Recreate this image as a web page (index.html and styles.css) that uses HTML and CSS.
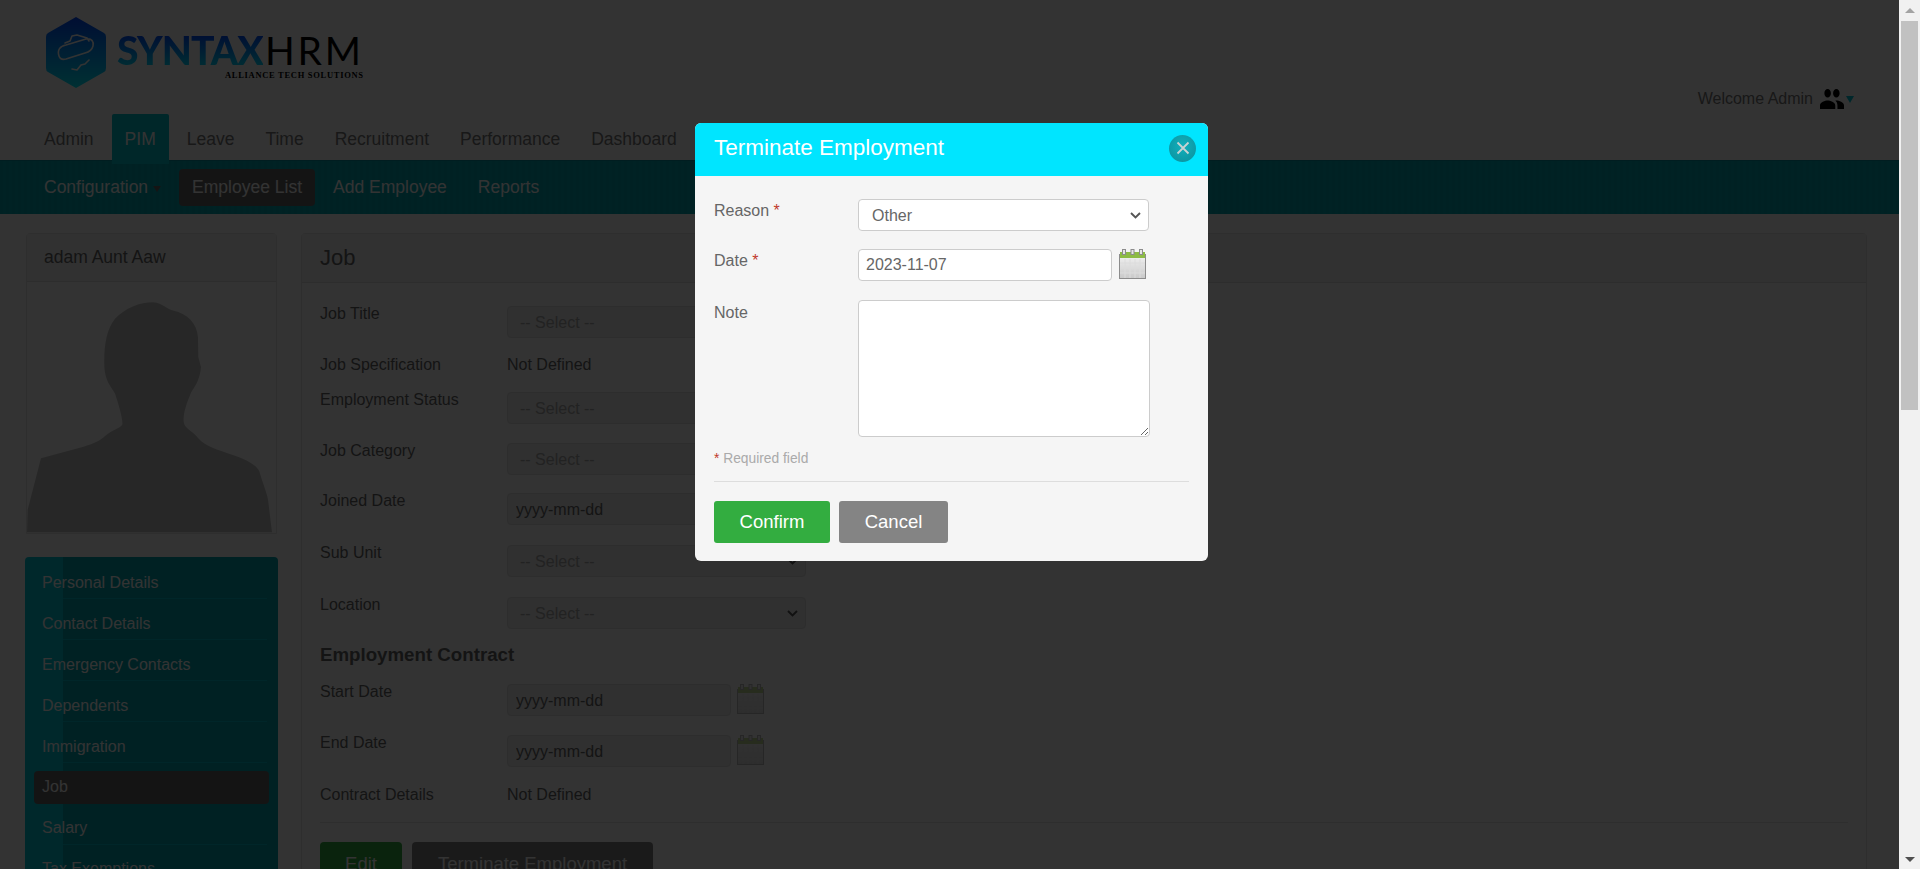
FILE: index.html
```html
<!DOCTYPE html>
<html lang="en">
<head>
    <meta charset="UTF-8">
    <meta name="viewport" content="width=device-width, initial-scale=1.0">
    <title>Terminate Employment</title>
    <link rel="stylesheet" href="styles.css">
</head>
<body>

<svg class="sprites" width="0" height="0" aria-hidden="true">
    <defs>
        <linearGradient id="calBody" x1="0" y1="0" x2="0" y2="1">
            <stop offset="0" stop-color="#f2f2f2"/>
            <stop offset="1" stop-color="#c9c9c9"/>
        </linearGradient>
        <linearGradient id="hexFill" x1="0" y1="0" x2="0" y2="1">
            <stop offset="0" stop-color="#0046ff"/>
            <stop offset="1" stop-color="#00f0ff"/>
        </linearGradient>
        <symbol id="calendar" viewBox="0 0 27 30">
            <rect x="0.5" y="5.5" width="26" height="24" fill="url(#calBody)" stroke="#8c8c8c"/>
            <rect x="1" y="3" width="25" height="6" fill="#8dbb45"/>
            <path d="M6 10v19M11 10v19M16 10v19M21 10v19M1 14h25M1 19h25M1 24h25" stroke="#dcdcdc" fill="none"/>
            <rect x="3.5" y="0.5" width="3" height="5" fill="#e6e6e6" stroke="#8c8c8c"/>
            <rect x="12" y="0.5" width="3" height="5" fill="#e6e6e6" stroke="#8c8c8c"/>
            <rect x="20.5" y="0.5" width="3" height="5" fill="#e6e6e6" stroke="#8c8c8c"/>
        </symbol>
    </defs>
</svg>

<div class="viewport">
    <div class="page">

        <header class="brand">
            <div class="logo">
                <svg class="logo-mark" viewBox="0 0 60 71" width="60" height="71">
                    <path d="M30 0 58 16Q60 17 60 20V51Q60 54 58 55L30 71 2 55Q0 54 0 51V20Q0 17 2 16Z" fill="url(#hexFill)"/>
                    <path d="M19 26 24 24 26 19 31 18 41 21M41 21 43 24M13 39C11 33 14 29 20 28L40 22C46 21 48 25 47 29 46 33 43 35 39 36L20 42C16 43 14 42 13 39ZM26 52 31 53 35 48 39 47 43 43" fill="none" stroke="#fff" stroke-width="1.6" stroke-linejoin="round" stroke-linecap="round"/>
                </svg>
                <div class="wordmark">
                    <div class="wordmark-name"><span class="wordmark-syntax">SYNTAX</span><span class="wordmark-hrm">HRM</span></div>
                    <div class="wordmark-tag">ALLIANCE TECH SOLUTIONS</div>
                </div>
            </div>
            <div class="welcome">
                <span>Welcome Admin</span>
                <svg class="welcome-icon" viewBox="1 5 22 14" width="24" height="20" preserveAspectRatio="none">
                    <path d="M16 11c1.66 0 2.99-1.34 2.99-3S17.66 5 16 5c-1.66 0-3 1.34-3 3s1.34 3 3 3zm-8 0c1.66 0 2.99-1.34 2.99-3S9.66 5 8 5C6.34 5 5 6.34 5 8s1.34 3 3 3zm0 2c-2.33 0-7 1.17-7 3.5V19h14v-2.5c0-2.33-4.67-3.5-7-3.5zm8 0c-.29 0-.62.02-.97.05 1.16.84 1.97 1.97 1.97 3.45V19h6v-2.5c0-2.33-4.67-3.5-7-3.5z"/>
                </svg>
                <span class="welcome-arrow"></span>
            </div>
        </header>

        <nav class="main-nav">
            <a href="#">Admin</a>
            <a href="#" class="current">PIM</a>
            <a href="#">Leave</a>
            <a href="#">Time</a>
            <a href="#">Recruitment</a>
            <a href="#">Performance</a>
            <a href="#">Dashboard</a>
        </nav>

        <nav class="sub-nav">
            <a href="#">Configuration<span class="sub-arrow"></span></a>
            <a href="#" class="current">Employee List</a>
            <a href="#">Add Employee</a>
            <a href="#">Reports</a>
        </nav>

        <div class="content">
            <aside class="sidebar">
                <div class="profile">
                    <div class="profile-name">adam Aunt Aaw</div>
                    <svg class="profile-photo" viewBox="80 156 750 752" width="249" height="251">
                        <path d="M80 908 82 840 122 685 250 650C280 642 300 632 315 618 335 600 360 595 367 583 370 570 355 520 345 490 330 465 315 450 313 410 311 350 318 300 345 265 375 232 420 215 460 215 490 218 500 235 520 240 565 250 592 280 595 320L596 380 604 410C602 440 590 465 575 485 560 520 550 550 552 575 554 595 575 600 590 618 610 645 640 655 680 668 725 682 770 700 780 725 790 760 803 790 806 810L818 908Z" fill="#c4c4c4"/>
                    </svg>
                </div>
                <ul class="side-menu">
                    <li><a href="#">Personal Details</a></li>
                    <li><a href="#">Contact Details</a></li>
                    <li><a href="#">Emergency Contacts</a></li>
                    <li><a href="#">Dependents</a></li>
                    <li><a href="#">Immigration</a></li>
                    <li class="current"><a href="#">Job</a></li>
                    <li><a href="#">Salary</a></li>
                    <li><a href="#">Tax Exemptions</a></li>
                </ul>
            </aside>

            <section class="panel">
                <h1 class="panel-title">Job</h1>
                <form class="panel-body">
                    <div class="row row-short">
                        <label>Job Title</label>
                        <select class="field"><option>-- Select --</option></select>
                    </div>
                    <div class="row row-text">
                        <label>Job Specification</label>
                        <span>Not Defined</span>
                    </div>
                    <div class="row">
                        <label>Employment Status</label>
                        <select class="field"><option>-- Select --</option></select>
                    </div>
                    <div class="row gap-18">
                        <label>Job Category</label>
                        <select class="field"><option>-- Select --</option></select>
                    </div>
                    <div class="row gap-20">
                        <label>Joined Date</label>
                        <div class="date-field">
                            <input class="field" type="text" value="yyyy-mm-dd">
                            <svg class="cal" width="27" height="30"><use href="#calendar"/></svg>
                        </div>
                    </div>
                    <div class="row gap-20">
                        <label>Sub Unit</label>
                        <select class="field"><option>-- Select --</option></select>
                    </div>
                    <div class="row row-last">
                        <label>Location</label>
                        <select class="field"><option>-- Select --</option></select>
                    </div>

                    <h2 class="panel-subtitle">Employment Contract</h2>

                    <div class="row">
                        <label>Start Date</label>
                        <div class="date-field">
                            <input class="field" type="text" value="yyyy-mm-dd">
                            <svg class="cal" width="27" height="30"><use href="#calendar"/></svg>
                        </div>
                    </div>
                    <div class="row row-before-text">
                        <label>End Date</label>
                        <div class="date-field">
                            <input class="field" type="text" value="yyyy-mm-dd">
                            <svg class="cal" width="27" height="30"><use href="#calendar"/></svg>
                        </div>
                    </div>
                    <div class="row row-text">
                        <label>Contract Details</label>
                        <span>Not Defined</span>
                    </div>

                    <hr class="panel-rule">

                    <div class="panel-actions">
                        <button type="button" class="btn btn-edit">Edit</button>
                        <button type="button" class="btn btn-dark">Terminate Employment</button>
                    </div>
                </form>
            </section>
        </div>

        <!-- Modal backdrop + dialog -->
        <div class="backdrop"></div>
        <div class="modal">
            <div class="modal-head">
                <h3>Terminate Employment</h3>
                <a href="#" class="modal-close">
                    <svg viewBox="0 0 14 14" width="14" height="14">
                        <path d="M1.5 1.5 12.5 12.5M12.5 1.5 1.5 12.5" stroke="#c8d2d2" stroke-width="1.8" fill="none"/>
                    </svg>
                </a>
            </div>
            <form class="modal-body">
                <div class="modal-row">
                    <label>Reason <em>*</em></label>
                    <select class="modal-select"><option>Other</option></select>
                </div>
                <div class="modal-row">
                    <label>Date <em>*</em></label>
                    <div class="modal-date">
                        <input class="modal-input" type="text" value="2023-11-07">
                        <svg class="cal" width="27" height="30"><use href="#calendar"/></svg>
                    </div>
                </div>
                <div class="modal-row modal-row-note">
                    <label>Note</label>
                    <textarea class="modal-note"></textarea>
                </div>
                <p class="required-note"><em>*</em> Required field</p>
                <hr class="modal-rule">
                <div class="modal-actions">
                    <button type="button" class="modal-btn confirm">Confirm</button>
                    <button type="button" class="modal-btn cancel">Cancel</button>
                </div>
            </form>
        </div>
    </div>

    <div class="scrollbar">
        <span class="scroll-up"></span>
        <div class="scroll-track"><div class="scroll-thumb"></div></div>
        <span class="scroll-down"></span>
    </div>
</div>

</body>
</html>
```

FILE: styles.css
```css
* {
    box-sizing: border-box;
}

html, body {
    margin: 0;
    height: 100%;
    overflow: hidden;
}

body {
    font-family: 'Liberation Sans', Arial, sans-serif;
    font-size: 16px;
    color: #666;
    background-color: #fff;
}

.sprites {
    display: block;
    height: 0;
}

.viewport {
    display: flex;
    height: 869px;
}

.page {
    position: relative;
    flex: 1;
    min-width: 0;
    height: 869px;
    overflow: hidden;
    background-color: #fff;
}

/* Header */
.brand {
    display: flex;
    justify-content: space-between;
    height: 114px;
    padding: 17px 45px 0 46px;
}

.logo {
    display: flex;
    gap: 11px;
}

.wordmark {
    display: flex;
    flex-direction: column;
    align-items: flex-end;
    padding-top: 14px;
}

.wordmark-name {
    display: flex;
    font-family: 'Lato', sans-serif;
    font-size: 39px;
    line-height: 38px;
}

.wordmark-syntax {
    font-weight: 900;
    letter-spacing: -0.9px;
    background: linear-gradient(#0038ff, #00e8ff);
    -webkit-background-clip: text;
    background-clip: text;
    color: transparent;
}

.wordmark-hrm {
    margin-left: 2px;
    color: #000;
    letter-spacing: 2.8px;
}

.wordmark-tag {
    margin-top: 2px;
    font-family: 'Liberation Serif', serif;
    font-size: 8.5px;
    font-weight: bold;
    line-height: 9px;
    letter-spacing: 0.7px;
    color: #000;
    white-space: nowrap;
}

.welcome {
    display: flex;
    align-items: center;
    gap: 7px;
    height: 20px;
    margin-top: 72px;
    color: #777;
}

.welcome-icon {
    fill: #000;
}

.welcome-arrow {
    width: 0;
    height: 0;
    margin-left: -5px;
    border-left: 4px solid transparent;
    border-right: 4px solid transparent;
    border-top: 7px solid #00c4d4;
}

/* Main menu */
.main-nav {
    position: relative;
    display: flex;
    gap: 5px;
    height: 46px;
    padding-left: 31px;
}

.main-nav a {
    display: block;
    height: 50px;
    padding: 0 13px;
    font-size: 17.5px;
    line-height: 50px;
    color: #777;
    text-decoration: none;
    border-radius: 2px 2px 0 0;
}

.main-nav a.current {
    color: #fff;
    background-color: #00c0cc;
}

.sub-nav {
    display: flex;
    align-items: center;
    gap: 5px;
    height: 54px;
    padding-left: 31px;
    border-top: 1px solid #0090a0;
    background: repeating-linear-gradient(90deg, #00a4b0 0, #00a4b0 3px, #00aab6 3px, #00aab6 6px);
}

.sub-nav a {
    display: block;
    height: 37px;
    padding: 0 13px;
    font-size: 17.5px;
    line-height: 37px;
    color: #fff;
    text-decoration: none;
    border-radius: 4px;
}

.sub-nav a.current {
    background-color: #666;
}

.sub-arrow {
    display: inline-block;
    margin-left: 5px;
    vertical-align: 1px;
    border-left: 4px solid transparent;
    border-right: 4px solid transparent;
    border-top: 6px solid #666;
}

/* Page body */
.content {
    display: flex;
    gap: 23px;
    padding: 19px 32px 0 25px;
}

.sidebar {
    flex: 0 0 253px;
}

.profile {
    margin: 0 1px;
    height: 301px;
    border: 1px solid #e4e4e4;
    border-radius: 4px 4px 0 0;
    background-color: #fff;
}

.profile-name {
    height: 48px;
    padding-left: 17px;
    font-size: 17.5px;
    line-height: 47px;
    color: #666;
    background-color: #f5f5f5;
    border-bottom: 1px solid #e0e0e0;
}

.profile-photo {
    display: block;
}

.side-menu {
    margin: 23px 0 0;
    padding: 1px 0 0;
    list-style: none;
    border-radius: 4px;
    background: linear-gradient(90deg, #00c8d8 38px, #00a4b0 38px);
}

.side-menu li {
    height: 41px;
    padding: 8px 9px 0;
    background: linear-gradient(#00bccb, #00bccb) no-repeat 38px 100% / 204px 1px;
}

.side-menu a {
    display: block;
    height: 33px;
    padding: 7px 8px 6px;
    font-size: 16px;
    line-height: 20px;
    color: #fff;
    text-decoration: none;
    border-radius: 4px;
}

.side-menu li.current {
    background: none;
}

.side-menu li.current a {
    padding: 6px 8px 7px;
    background-color: #666;
}

.side-menu li.current ~ li a {
    padding: 6px 8px 7px;
}

.panel {
    flex: 1;
    min-width: 0;
    border: 1px solid #e4e4e4;
    border-radius: 4px 4px 0 0;
    background-color: #fff;
}

.panel-title {
    margin: 0;
    height: 49px;
    padding-left: 18px;
    font-size: 22px;
    font-weight: normal;
    line-height: 47px;
    color: #666;
    background-color: #f5f5f5;
    border-bottom: 1px solid #e0e0e0;
}

.panel-body {
    padding: 23px 18px 0;
}

.row {
    display: grid;
    grid-template-columns: 187px 299px;
    margin-bottom: 19px;
    color: #666;
}

.row label {
    line-height: 16px;
}

.gap-18 {
    margin-bottom: 18px;
}

.gap-20 {
    margin-bottom: 20px;
}

.row-short {
    margin-bottom: 17px;
}

.row-text {
    margin-bottom: 17px;
    line-height: 20px;
}

.row-text label {
    line-height: 20px;
}

.row-last {
    margin-bottom: 15px;
}

.row-before-text {
    margin-bottom: 18px;
}

.field {
    display: block;
    width: 100%;
    height: 32px;
    padding: 0 24px 0 12px;
    font-family: inherit;
    font-size: 16px;
    color: #aaa;
    background-color: #eee;
    border: 1px solid #e0e0e0;
    border-radius: 4px;
}

select.field, .modal-select {
    -webkit-appearance: none;
    appearance: none;
    background-image: url("data:image/svg+xml,%3Csvg xmlns='http://www.w3.org/2000/svg' width='11' height='7' viewBox='0 0 11 7'%3E%3Cpath d='M1 1l4.5 4.5L10 1' fill='none' stroke='%23555' stroke-width='1.9'/%3E%3C/svg%3E");
    background-repeat: no-repeat;
    background-position: right 7px center;
}

input.field {
    padding: 1px 8px 0;
    color: #666;
}

.date-field {
    display: flex;
    gap: 6px;
    width: 257px;
}

.date-field .field {
    flex: 1;
    min-width: 0;
    width: 224px;
}

.date-field .cal {
    opacity: 0.55;
}

.cal {
    flex: none;
}

.panel-subtitle {
    margin: 0 0 18px;
    font-size: 18.7px;
    line-height: 22px;
    color: #666;
}

.panel-rule {
    margin: 0 0 19px;
    border: none;
    border-top: 1px solid #e6e6e6;
}

.panel-actions {
    display: flex;
    gap: 10px;
}

.btn {
    height: 42px;
    padding: 2px 0 0;
    font-family: inherit;
    font-size: 18.5px;
    color: #fff;
    border: none;
    border-radius: 4px;
}

.btn-edit {
    width: 82px;
    background-color: #33ad40;
}

.btn-dark {
    width: 241px;
    background-color: #848484;
}

/* Modal */
.backdrop {
    position: absolute;
    inset: 0;
    background-color: rgba(0, 0, 0, 0.8);
}

.modal {
    position: absolute;
    top: 123px;
    left: 695px;
    width: 513px;
    height: 438px;
    overflow: hidden;
    border-radius: 6px;
    background-color: #f5f5f5;
}

.modal-head {
    display: flex;
    align-items: center;
    justify-content: space-between;
    height: 53px;
    padding: 0 12px 0 19px;
    background-color: #00e5ff;
}

.modal-head h3 {
    margin: 0;
    padding-bottom: 4px;
    font-size: 22.5px;
    font-weight: normal;
    color: #fff;
}

.modal-close {
    display: flex;
    align-items: center;
    justify-content: center;
    width: 27px;
    height: 27px;
    margin-top: -3px;
    border-radius: 50%;
    background: radial-gradient(circle at 50% 40%, #12b0bc, #0a8f9c);
}

.modal-body {
    padding: 23px 19px 0;
}

.modal-row {
    display: grid;
    grid-template-columns: 144px 291px;
    margin-bottom: 18px;
}

.modal-row label {
    font-size: 16px;
    line-height: 24px;
}

.modal-row em, .required-note em {
    font-style: normal;
    color: #c0392b;
}

.modal-row-note {
    grid-template-columns: 144px 292px;
    margin: 19px 0 0;
}

.modal-row-note label {
    line-height: 25px;
}

.modal-select {
    width: 291px;
    height: 32px;
    padding: 0 24px 0 13px;
    font-family: inherit;
    font-size: 16px;
    color: #666;
    background-color: #fff;
    border: 1px solid #ccc;
    border-radius: 4px;
}

.modal-date {
    display: flex;
    gap: 7px;
}

.modal-input {
    width: 254px;
    height: 32px;
    padding: 0 7px;
    font-family: inherit;
    font-size: 16px;
    color: #666;
    background-color: #fff;
    border: 1px solid #ccc;
    border-radius: 4px;
}

.modal-note {
    display: block;
    width: 292px;
    height: 137px;
    font-family: inherit;
    font-size: 16px;
    background-color: #fff;
    border: 1px solid #ccc;
    border-radius: 4px;
}

.required-note {
    margin: 14px 0 0;
    font-size: 13.8px;
    line-height: 16px;
    color: #aaa;
}

.modal-rule {
    margin: 14px 0 19px;
    border: none;
    border-top: 1px solid #ddd;
}

.modal-actions {
    display: flex;
    gap: 9px;
}

.modal-btn {
    height: 42px;
    font-family: inherit;
    font-size: 18.5px;
    color: #fff;
    border: none;
    border-radius: 3px;
}

.confirm {
    width: 116px;
    background-color: #33ad40;
}

.cancel {
    width: 109px;
    background-color: #848484;
}

/* Browser scrollbar */
.scrollbar {
    display: flex;
    flex: 0 0 21px;
    flex-direction: column;
    align-items: center;
    height: 869px;
    background-color: #f1f1f1;
}

.scroll-up {
    flex: none;
    width: 0;
    height: 0;
    margin: 8px 0 8px;
    border-left: 5px solid transparent;
    border-right: 5px solid transparent;
    border-bottom: 5px solid #a3a3a3;
}

.scroll-track {
    flex: 1;
    width: 100%;
    padding: 0 2px;
}

.scroll-thumb {
    height: 389px;
    background-color: #c1c1c1;
}

.scroll-down {
    flex: none;
    width: 0;
    height: 0;
    margin: 9px 0 7px;
    border-left: 5px solid transparent;
    border-right: 5px solid transparent;
    border-top: 5px solid #505050;
}
```
